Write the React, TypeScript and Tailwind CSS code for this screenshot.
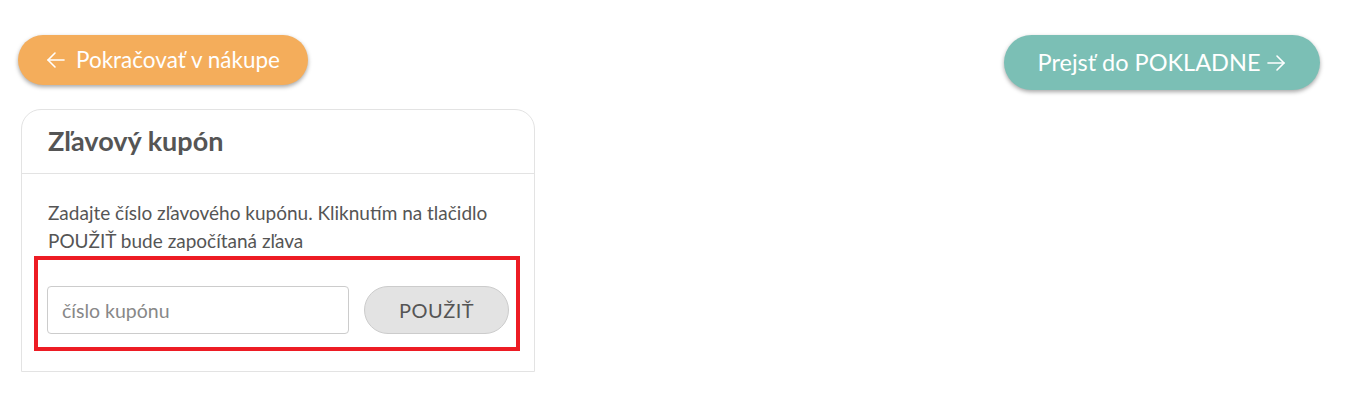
import { useState } from 'react';

function Arrow({ dir }: { dir: 'left' | 'right' }) {
  return (
    <svg width="20" height="18" viewBox="0 0 20 18" fill="none" stroke="currentColor" strokeWidth="1.6" strokeLinecap="round" strokeLinejoin="round">
      {dir === 'left' ? (
        <>
          <path d="M18 9H2" />
          <path d="M9 2L2 9l7 7" />
        </>
      ) : (
        <>
          <path d="M2 9h16" />
          <path d="M11 2l7 7-7 7" />
        </>
      )}
    </svg>
  );
}

export default function App() {
  const [code, setCode] = useState('');

  return (
    <div className="w-[1360px] h-[402px] bg-white font-['Lato',sans-serif] text-[#555]">
      <div className="flex items-start justify-between pl-[18px] pr-[40px] pt-[35px]">
        <button className="flex items-center gap-[10px] h-[50px] w-[290px] justify-center rounded-full bg-[#f4ad5b] text-white text-[22.5px] shadow-[0_2px_4px_rgba(0,0,0,0.35)]">
          <Arrow dir="left" />
          <span>Pokračovať v nákupe</span>
        </button>
        <button className="flex items-center gap-[6px] h-[55px] w-[316px] justify-center rounded-full bg-[#7bbfb5] text-white text-[23.5px] shadow-[0_2px_4px_rgba(0,0,0,0.35)]">
          <span>Prejsť do POKLADNE</span>
          <Arrow dir="right" />
        </button>
      </div>

      <div className="ml-[21px] mt-[19px] w-[514px] border border-[#e3e3e3] rounded-t-[20px]">
        <div className="h-[64px] flex items-center px-[26px] border-b border-[#e3e3e3]">
          <h2 className="text-[27px] font-bold text-[#555]">Zľavový kupón</h2>
        </div>
        <div className="pt-[25px] pb-[20px]">
          <p className="px-[26px] text-[19px] leading-[28px] text-[#555]">
            Zadajte číslo zľavového kupónu. Kliknutím na tlačidlo POUŽIŤ bude započítaná zľava
          </p>
          <div className="mt-[1px] ml-[12px] mr-[14px] border-[4px] border-[#ed1c24] pt-[26px] pb-[13px] pl-[9px] pr-[7px] flex items-stretch gap-[15px]">
            <input
              value={code}
              onChange={(e) => setCode(e.target.value)}
              placeholder="číslo kupónu"
              className="w-[302px] h-[48px] box-border rounded-[4px] border border-[#ccc] px-[14px] text-[19.5px] text-[#555] placeholder:text-[#888] outline-none"
            />
            <button className="w-[145px] h-[48px] rounded-full bg-[#e3e3e3] border border-[#ccc] text-[20px] text-[#555] tracking-[0.5px]">
              POUŽIŤ
            </button>
          </div>
        </div>
      </div>
    </div>
  );
}
